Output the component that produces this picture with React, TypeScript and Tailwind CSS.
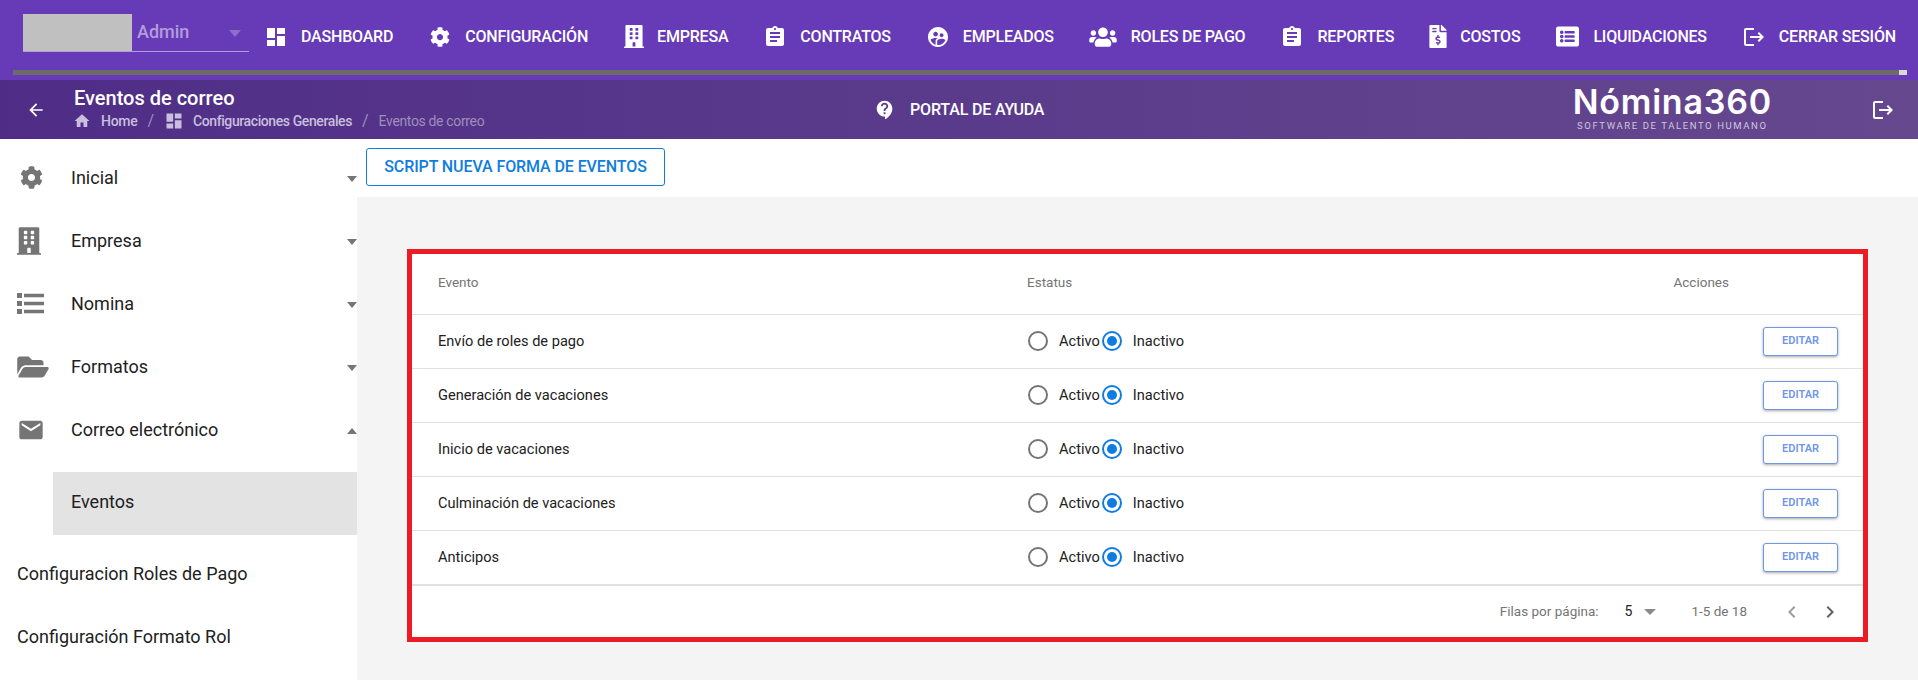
import React from 'react';
import { FaBuilding, FaCog, FaFileInvoiceDollar, FaFolderOpen, FaListAlt, FaUsers } from 'react-icons/fa';
import { MdArrowBack, MdAssignment, MdChevronLeft, MdChevronRight, MdContactSupport, MdDashboard, MdEmail, MdHome, MdLogout, MdSupervisedUserCircle } from 'react-icons/md';

const topItems = [
  { label: 'DASHBOARD', box: 'w-[22px]', icon: <MdDashboard className="w-[24px] h-[24px] shrink-0" /> },
  { label: 'CONFIGURACIÓN', box: 'w-[22px]', icon: <FaCog className="w-[20px] h-[20px] shrink-0" /> },
  { label: 'EMPRESA', box: 'w-[19px]', icon: <FaBuilding className="w-[20px] h-[23px] shrink-0" /> },
  { label: 'CONTRATOS', box: 'w-[22px]', icon: <MdAssignment className="w-[24px] h-[24px] shrink-0" /> },
  { label: 'EMPLEADOS', box: 'w-[22px]', icon: <MdSupervisedUserCircle className="w-[24px] h-[24px] shrink-0" /> },
  { label: 'ROLES DE PAGO', box: 'w-[27px]', icon: <FaUsers className="w-[28px] h-[22px] shrink-0" /> },
  { label: 'REPORTES', box: 'w-[22px]', icon: <MdAssignment className="w-[24px] h-[24px] shrink-0" /> },
  { label: 'COSTOS', box: 'w-[16px]', icon: <FaFileInvoiceDollar className="w-[18px] h-[23px] shrink-0" /> },
  { label: 'LIQUIDACIONES', box: 'w-[23px]', icon: <FaListAlt className="w-[23px] h-[23px] shrink-0" /> },
  { label: 'CERRAR SESIÓN', box: 'w-[22px]', icon: <MdLogout className="w-[24px] h-[24px] shrink-0" /> },
];

function ListIcon() {
  return (
    <svg viewBox="0 0 27 21" className="w-[27px] h-[21px]" fill="currentColor">
      <rect x="0" y="0" width="5" height="5" />
      <rect x="7" y="0.75" width="20" height="3.5" />
      <rect x="0" y="8" width="5" height="5" />
      <rect x="7" y="8.75" width="20" height="3.5" />
      <rect x="0" y="16" width="5" height="5" />
      <rect x="7" y="16.75" width="20" height="3.5" />
    </svg>
  );
}

const sideItems = [
  { label: 'Inicial', open: false, icon: <FaCog className="w-[23px] h-[23px] ml-[3px]" /> },
  { label: 'Empresa', open: false, icon: <FaBuilding className="w-[24px] h-[28px]" /> },
  { label: 'Nomina', open: false, icon: <ListIcon /> },
  { label: 'Formatos', open: false, icon: <FaFolderOpen className="w-[32px] h-[28px]" /> },
  { label: 'Correo electrónico', open: true, icon: <MdEmail className="w-[28px] h-[28px]" /> },
];

const events = ['Envío de roles de pago', 'Generación de vacaciones', 'Inicio de vacaciones', 'Culminación de vacaciones', 'Anticipos'];

function Caret({ up }: { up?: boolean }) {
  return (
    <span
      className={
        up
          ? 'w-0 h-0 border-x-[5.5px] border-x-transparent border-b-[6px] border-b-[#757575]'
          : 'w-0 h-0 border-x-[5.5px] border-x-transparent border-t-[6px] border-t-[#757575]'
      }
    />
  );
}

function Radio({ checked }: { checked?: boolean }) {
  return (
    <span
      className={`w-[20px] h-[20px] rounded-full border-2 flex items-center justify-center shrink-0 ${
        checked ? 'border-[#0f7de0]' : 'border-[#757575]'
      }`}
    >
      {checked && <span className="w-[10px] h-[10px] rounded-full bg-[#0f7de0]" />}
    </span>
  );
}

function TopBar() {
  return (
    <div className="h-[80px] bg-[#673ab7] relative">
      <div className="h-[70px] flex items-center pl-[23px] text-white">
        <div className="w-[226px] h-[38px] flex mt-[-5px] border-b border-white/50 relative">
          <div className="w-[109px] h-[37px] bg-[#c0c0c0] shrink-0" />
          <span className="ml-[5px] text-[18px] font-medium text-[#b39ddb] leading-[24px] mt-[6px]">Admin</span>
          <span className="absolute left-[206px] top-[16px]">
            <span className="block w-0 h-0 border-x-[6px] border-x-transparent border-t-[7px] border-t-[#8d6fc9]" />
          </span>
        </div>
        <div className="flex items-center gap-[36px] ml-[16px] mt-[3px]">
          {topItems.map((item) => (
            <div key={item.label} className="flex items-center gap-[14px]">
              <span className={`${item.box} flex justify-center`}>{item.icon}</span>
              <span className="text-[16px] font-medium whitespace-nowrap tracking-[-0.2px]">{item.label}</span>
            </div>
          ))}
        </div>
      </div>
      <div className="ml-[13px] mr-[11px] h-[5px] bg-[#6b6b6b] flex justify-end">
        <div className="w-[8px] bg-[#d8d8d8]" />
      </div>
    </div>
  );
}

function SubBar() {
  return (
    <div className="h-[59px] bg-gradient-to-r from-[#4f2d87] to-[#66488f] flex items-center text-white relative">
      <MdArrowBack className="w-[20px] h-[20px] ml-[26px]" />
      <div className="ml-[28px] w-[500px]">
        <div className="text-[20px] font-medium leading-[24px] mt-[-3px]">Eventos de correo</div>
        <div className="flex items-center text-[14px] leading-[20px] mt-[1px] text-[#c9bedd]">
          <MdHome className="w-[18px] h-[18px] ml-[-1px]" />
          <span className="ml-[10px] font-medium tracking-[-0.3px]">Home</span>
          <span className="mx-[10px] text-[#9f8cbc] text-[16px]">/</span>
          <MdDashboard className="w-[20px] h-[20px]" />
          <span className="ml-[9px] font-medium tracking-[-0.4px]">Configuraciones Generales</span>
          <span className="ml-[10px] mr-[10px] text-[#9f8cbc] text-[16px]">/</span>
          <span className="text-[#9d8ebb] tracking-[-0.35px]">Eventos de correo</span>
        </div>
      </div>
      <div className="flex items-center ml-[300px]">
        <MdContactSupport className="w-[22px] h-[22px]" />
        <span className="ml-[14px] text-[16px] font-medium tracking-[-0.15px] whitespace-nowrap">PORTAL DE AYUDA</span>
      </div>
      <div className="ml-[528px] flex flex-col items-center w-[200px] mt-[-2px]">
        <span className="font-['Inter',sans-serif] text-[34px] font-semibold leading-[32px] tracking-[0.8px]">Nómina360</span>
        <span className="text-[9.5px] tracking-[1.6px] text-[#cfc6de] leading-[10px] mt-[3px] whitespace-nowrap">SOFTWARE DE TALENTO HUMANO</span>
      </div>
      <MdLogout className="w-[24px] h-[24px] ml-[99px]" />
    </div>
  );
}

function Sidebar() {
  return (
    <aside className="w-[357px] shrink-0 bg-white text-[18px] text-[#212121]">
      <div className="pt-[7px]">
        {sideItems.map((item) => (
          <div key={item.label} className="h-[63px] flex items-center relative">
            <div className="w-[71px] pl-[17px] text-[#757575] flex items-center">{item.icon}</div>
            <span>{item.label}</span>
            <span className="absolute right-0 top-[30px] flex">
              <Caret up={item.open} />
            </span>
          </div>
        ))}
        <div className="h-[11px]" />
        <div className="ml-[53px] h-[63px] bg-[#e3e3e3] flex items-center pl-[18px] pb-[4px]">Eventos</div>
        <div className="h-[7px]" />
        <div className="h-[63px] flex items-center pl-[17px]">Configuracion Roles de Pago</div>
        <div className="h-[63px] flex items-center pl-[17px]">Configuración Formato Rol</div>
      </div>
    </aside>
  );
}

function EventTable() {
  return (
    <div className="border-[5px] border-[#ed1c24] bg-white">
      <div className="h-[61px] grid grid-cols-[589px_1fr_auto] items-center pl-[26px] pr-[25px] pb-[3px] text-[13.5px] text-[#757575] border-b border-[#e0e0e0]">
        <span>Evento</span>
        <span>Estatus</span>
        <span className="mr-[109px]">Acciones</span>
      </div>
      {events.map((name) => (
        <div
          key={name}
          className="h-[54px] grid grid-cols-[589px_1fr_auto] items-center pl-[26px] pr-[25px] text-[14.6px] text-[#212121] border-b border-[#e0e0e0]"
        >
          <span>{name}</span>
          <div className="flex items-center pl-[1px]">
            <Radio />
            <span className="ml-[11px]">Activo</span>
            <span className="ml-[2px]"><Radio checked /></span>
            <span className="ml-[11px]">Inactivo</span>
          </div>
          <button className="w-[75px] h-[29px] rounded-[3px] border border-[#7096e8] text-[#7096e8] text-[11px] font-semibold bg-white shadow-[0_1px_3px_rgba(0,0,0,0.35)]">
            EDITAR
          </button>
        </div>
      ))}
      <div className="h-[52px] border-t border-[#e0e0e0] flex items-center justify-end text-[13.5px] text-[#757575] pr-[21px]">
        <span>Filas por página:</span>
        <span className="ml-[26px] text-[#212121] text-[14px]">5</span>
        <span className="ml-[12px] flex"><span className="w-0 h-0 border-x-[6px] border-x-transparent border-t-[6px] border-t-[#8a8a8a]" /></span>
        <span className="ml-[35px]">1-5 de 18</span>
        <MdChevronLeft className="w-[24px] h-[24px] ml-[33px] text-[#9e9e9e]" />
        <MdChevronRight className="w-[24px] h-[24px] ml-[14px] text-[#616161]" />
      </div>
    </div>
  );
}

export default function App() {
  return (
    <div className="w-[1918px] h-[680px] overflow-hidden bg-white font-['Roboto',sans-serif] flex flex-col">
      <TopBar />
      <SubBar />
      <div className="flex flex-1 min-h-0">
        <Sidebar />
        <main className="flex-1 flex flex-col">
          <div className="h-[58px] bg-white pl-[9px] pt-[9px]">
            <button className="w-[299px] h-[38px] rounded-[3px] border border-[#0f7de0] text-[#0f7de0] text-[16px] font-medium tracking-[-0.1px]">
              SCRIPT NUEVA FORMA DE EVENTOS
            </button>
          </div>
          <div className="flex-1 bg-[#f4f4f4] pt-[52px] px-[50px]">
            <EventTable />
          </div>
        </main>
      </div>
    </div>
  );
}
